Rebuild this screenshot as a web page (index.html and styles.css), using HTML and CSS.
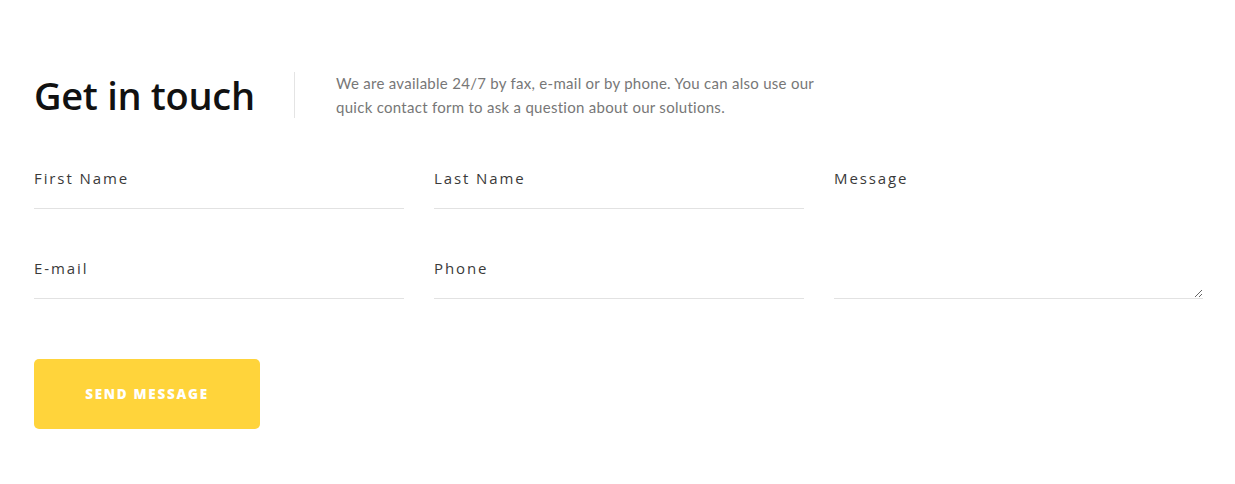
FILE: index.html
```html
<!DOCTYPE html>
<html lang="en">
<head>
<meta charset="utf-8">
<title>Get in touch</title>
<link rel="stylesheet" href="styles.css">
</head>
<body>
<section class="contact">
  <header class="intro">
    <h2 class="title">Get in touch</h2>
    <div class="divider"></div>
    <p class="lead">We are available 24/7 by fax, e-mail or by phone. You can also use our quick contact form to ask a question about our solutions.</p>
  </header>
  <form class="form">
    <input class="field" type="text" placeholder="First Name">
    <input class="field" type="text" placeholder="Last Name">
    <textarea class="field area" placeholder="Message"></textarea>
    <input class="field" type="email" placeholder="E-mail">
    <input class="field" type="tel" placeholder="Phone">
  </form>
  <button class="send" type="button">SEND MESSAGE</button>
</section>
</body>
</html>
```

FILE: styles.css
```css
* { box-sizing: border-box; }
html, body { margin: 0; background: #fff; }
body { font-family: "Open Sans", "Liberation Sans", sans-serif; }

.contact {
  padding: 71px 32px 0 34px;
}

.intro {
  display: flex;
  align-items: center;
  height: 48px;
}

.title {
  margin: 0;
  font-family: "Open Sans", "Liberation Sans", sans-serif;
  font-weight: 600;
  font-size: 38px;
  line-height: 48px;
  color: #111;
  letter-spacing: -0.3px;
  width: 220px;
  white-space: nowrap;
}

.divider {
  width: 1px;
  height: 46px;
  background: #e4e4e4;
  margin-left: 40px;
}

.lead {
  margin: 0 0 0 41px;
  width: 500px;
  font-family: Lato, "Liberation Sans", sans-serif;
  font-size: 15px;
  line-height: 24px;
  letter-spacing: 0.28px;
  color: #777;
}

.form {
  margin-top: 45px;
  display: grid;
  grid-template-columns: 370px 370px 369px;
  column-gap: 30px;
  row-gap: 45px;
  width: 1169px;
}

.field {
  display: block;
  width: 100%;
  margin: 0;
  border: 0;
  border-bottom: 1px solid #e2e2e2;
  border-radius: 0;
  padding: 4px 0 20px;
  height: 45px;
  font-family: "Open Sans", "Liberation Sans", sans-serif;
  font-size: 15px;
  line-height: 20px;
  letter-spacing: 1.9px;
  color: #3a3a3a;
  background: transparent;
  outline: none;
}

.field::placeholder {
  color: #3a3a3a;
  opacity: 1;
}

.area {
  grid-column: 3;
  grid-row: 1 / span 2;
  height: 135px;
  resize: vertical;
}

.send {
  display: block;
  margin-top: 60px;
  width: 226px;
  height: 70px;
  border: 0;
  border-radius: 5px;
  background: #ffd43b;
  color: #fff;
  font-family: "Open Sans", "Liberation Sans", sans-serif;
  font-weight: 800;
  font-size: 13.5px;
  letter-spacing: 1.7px;
  cursor: pointer;
}
```
